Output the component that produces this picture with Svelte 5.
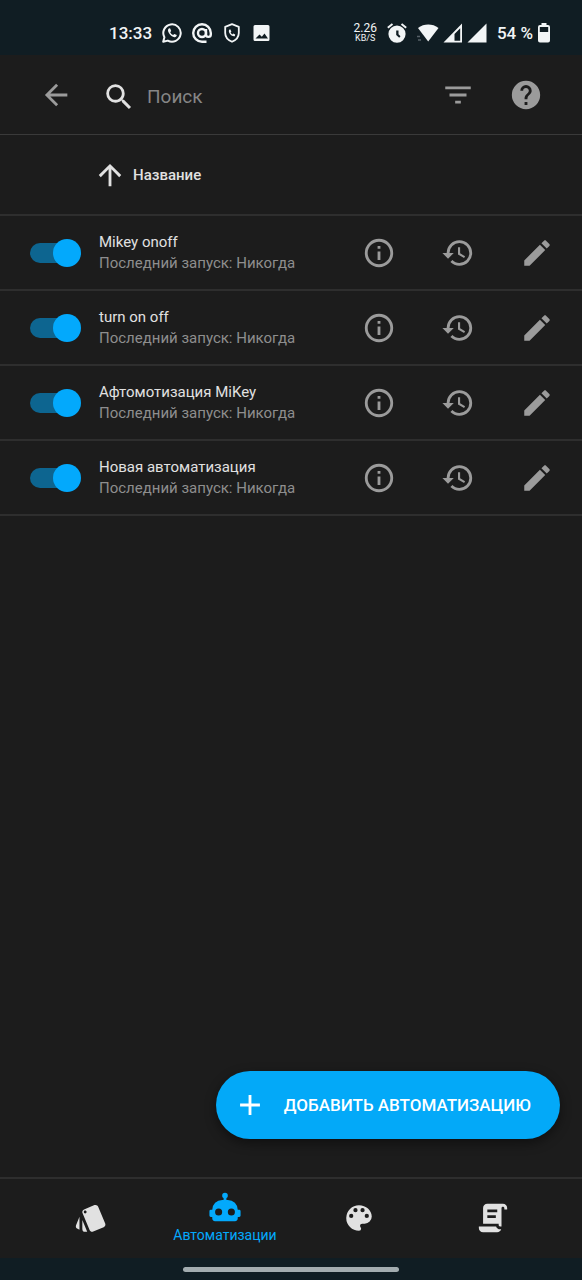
<script lang="ts">
  type Automation = { id: number; name: string; enabled: boolean };

  const icons = {
    back: 'M20,11V13H8L13.5,18.5L12.08,19.92L4.16,12L12.08,4.08L13.5,5.5L8,11H20Z',
    up: 'M13,20H11V8L5.5,13.5L4.08,12.08L12,4.16L19.92,12.08L18.5,13.5L13,8V20Z',
    search:
      'M9.5,3A6.5,6.5 0 0,1 16,9.5C16,11.11 15.41,12.59 14.44,13.73L14.71,14H15.5L20.5,19L19,20.5L14,15.5V14.71L13.73,14.44C12.59,15.41 11.11,16 9.5,16A6.5,6.5 0 0,1 3,9.5A6.5,6.5 0 0,1 9.5,3M9.5,5C7,5 5,7 5,9.5C5,12 7,14 9.5,14C12,14 14,12 14,9.5C14,7 12,5 9.5,5Z',
    filter: 'M6,13H18V11H6M3,6V8H21V6M10,18H14V16H10V18Z',
    help: 'M15.07,11.25L14.17,12.17C13.45,12.89 13,13.5 13,15H11V14.5C11,13.39 11.45,12.39 12.17,11.67L13.41,10.41C13.78,10.05 14,9.55 14,9C14,7.89 13.1,7 12,7A2,2 0 0,0 10,9H8A4,4 0 0,1 12,5A4,4 0 0,1 16,9C16,9.88 15.64,10.67 15.07,11.25M13,19H11V17H13M12,2A10,10 0 0,0 2,12A10,10 0 0,0 12,22A10,10 0 0,0 22,12C22,6.47 17.5,2 12,2Z',
    info: 'M11,9H13V7H11M12,20C7.59,20 4,16.41 4,12C4,7.59 7.59,4 12,4C16.41,4 20,7.59 20,12C20,16.41 16.41,20 12,20M12,2A10,10 0 0,0 2,12A10,10 0 0,0 12,22A10,10 0 0,0 22,12A10,10 0 0,0 12,2M11,17H13V11H11V17Z',
    history:
      'M13.5,8H12V13L16.28,15.54L17,14.33L13.5,12.25V8M13,3A9,9 0 0,0 4,12H1L4.96,16.03L9,12H6A7,7 0 0,1 13,5A7,7 0 0,1 20,12A7,7 0 0,1 13,19C11.07,19 9.32,18.21 8.06,16.94L6.64,18.36C8.27,20 10.5,21 13,21A9,9 0 0,0 22,12A9,9 0 0,0 13,3',
    pencil:
      'M20.71,7.04C21.1,6.65 21.1,6 20.71,5.63L18.37,3.29C18,2.9 17.35,2.9 16.96,3.29L15.12,5.12L18.87,8.87M3,17.25V21H6.75L17.81,9.93L14.06,6.18L3,17.25Z',
    plus: 'M19,13H13V19H11V13H5V11H11V5H13V11H19V13Z',
    blueprint:
      'M2.53,19.65L3.87,20.21V11.18L1.44,17.04C1.03,18.06 1.5,19.23 2.53,19.65M22.03,15.95L17.07,4C16.76,3.23 16.03,2.77 15.26,2.75C15,2.75 14.73,2.79 14.47,2.9L7.1,5.95C6.35,6.26 5.89,7 5.87,7.75C5.86,8 5.91,8.29 6,8.55L11,20.5C11.29,21.28 12.03,21.74 12.81,21.75C13.07,21.75 13.33,21.7 13.58,21.6L20.94,18.55C21.96,18.13 22.45,16.96 22.03,15.95M7.88,8.75A1,1 0 0,1 6.88,7.75A1,1 0 0,1 7.88,6.75C8.43,6.75 8.88,7.2 8.88,7.75C8.88,8.3 8.43,8.75 7.88,8.75M5.88,19.75A2,2 0 0,0 7.88,21.75H9.33L5.88,13.41V19.75Z',
    robot:
      'M12,2A2,2 0 0,1 14,4C14,4.74 13.6,5.39 13,5.73V7H14A7,7 0 0,1 21,14H22A1,1 0 0,1 23,15V18A1,1 0 0,1 22,19H21V20A2,2 0 0,1 19,22H5A2,2 0 0,1 3,20V19H2A1,1 0 0,1 1,18V15A1,1 0 0,1 2,14H3A7,7 0 0,1 10,7H11V5.73C10.4,5.39 10,4.74 10,4A2,2 0 0,1 12,2M7.5,13A2.5,2.5 0 0,0 5,15.5A2.5,2.5 0 0,0 7.5,18A2.5,2.5 0 0,0 10,15.5A2.5,2.5 0 0,0 7.5,13M16.5,13A2.5,2.5 0 0,0 14,15.5A2.5,2.5 0 0,0 16.5,18A2.5,2.5 0 0,0 19,15.5A2.5,2.5 0 0,0 16.5,13Z',
    palette:
      'M17.5,12A1.5,1.5 0 0,1 16,10.5A1.5,1.5 0 0,1 17.5,9A1.5,1.5 0 0,1 19,10.5A1.5,1.5 0 0,1 17.5,12M14.5,8A1.5,1.5 0 0,1 13,6.5A1.5,1.5 0 0,1 14.5,5A1.5,1.5 0 0,1 16,6.5A1.5,1.5 0 0,1 14.5,8M9.5,8A1.5,1.5 0 0,1 8,6.5A1.5,1.5 0 0,1 9.5,5A1.5,1.5 0 0,1 11,6.5A1.5,1.5 0 0,1 9.5,8M6.5,12A1.5,1.5 0 0,1 5,10.5A1.5,1.5 0 0,1 6.5,9A1.5,1.5 0 0,1 8,10.5A1.5,1.5 0 0,1 6.5,12M12,3A9,9 0 0,0 3,12A9,9 0 0,0 12,21A1.5,1.5 0 0,0 13.5,19.5C13.5,19.11 13.35,18.76 13.11,18.5C12.88,18.23 12.73,17.88 12.73,17.5A1.5,1.5 0 0,1 14.23,16H16A5,5 0 0,0 21,11C21,6.58 16.97,3 12,3Z',
    script:
      'M17.8,20C17.4,21.2 16.3,22 15,22H5C3.3,22 2,20.7 2,19V18H5L14.2,18C14.6,19.2 15.7,20 17,20H17.8M19,2C20.7,2 22,3.3 22,5V6H20V5C20,4.4 19.6,4 19,4C18.4,4 18,4.4 18,5V18H17C16.4,18 16,17.6 16,17V16H5V5C5,3.3 6.3,2 8,2H19M8,6V8H15V6H8M8,10V12H14V10H8Z',
  };

  let automations = $state<Automation[]>([
    { id: 1, name: 'Mikey onoff', enabled: true },
    { id: 2, name: 'turn on off', enabled: true },
    { id: 3, name: 'Афтомотизация MiKey', enabled: true },
    { id: 4, name: 'Новая автоматизация', enabled: true },
  ]);

  const tabs = [
    { id: 'blueprint', label: 'Проекты', icon: icons.blueprint },
    { id: 'automation', label: 'Автоматизации', icon: icons.robot },
    { id: 'scene', label: 'Сцены', icon: icons.palette },
    { id: 'script', label: 'Скрипты', icon: icons.script },
  ];

  let active = $state('automation');
  let query = $state('');
  let ascending = $state(true);

  let rows = $derived(
    automations.filter((a) => a.name.toLowerCase().includes(query.toLowerCase()))
  );
</script>

{#snippet icon(path: string)}
  <svg class="icon" viewBox="0 0 24 24" fill="currentColor" aria-hidden="true">
    <path d={path} />
  </svg>
{/snippet}

<div class="screen">
  <div class="status-bar">
    <div class="status-group notifications">
      <span class="clock">13:33</span>
      <svg width="20" height="20" viewBox="0 0 20 20" fill="none" stroke="currentColor" stroke-width="2">
        <path d="M1.2 18.8l1.2-4.6a8.7 8.7 0 1 1 3.4 3.4z" stroke-linejoin="round" />
        <path d="M7.2 5.3c-1.6.9-1.5 2.8-.3 4.6 1.5 2.4 3.6 4 5.6 4.3 1.3.1 2.3-.8 2.3-2.1l-2.5-1.2-1.2 1.2c-1.3-.6-2.3-1.6-2.9-2.8l1-1.3-1-2.6z" fill="currentColor" stroke="none" />
      </svg>
      <svg width="20" height="20" viewBox="0 0 20 20" fill="none" stroke="currentColor" stroke-width="2.4">
        <circle cx="10" cy="10" r="4" />
        <path d="M14 6v5.500a2.400 2.400 0 0 0 4.800 0V10a8.800 8.800 0 1 0-8.800 8.800h4.500" />
      </svg>
      <svg width="20" height="20" viewBox="0 0 20 20" fill="none" stroke="currentColor" stroke-width="1.8">
        <path d="M10 1.200l6.800 2.600v6.200c0 4-2.700 7-6.800 8.800-4.100-1.800-6.800-4.800-6.800-8.800V3.800z" stroke-linejoin="round" />
        <path d="M8.200 6.200C6.500 6.600 6.500 8.500 7.500 10.300c1.300 2.200 3.200 3.300 5.300 3l.4-1.800-2-.9-.9.800c-.8-.5-1.400-1.200-1.700-2.100l.8-.9z" fill="currentColor" stroke="none" />
      </svg>
      <svg width="20" height="20" viewBox="0 0 20 20">
        <path fill="currentColor" fill-rule="evenodd" d="M3 2h13a1.500 1.500 0 0 1 1.500 1.500v13a1.500 1.500 0 0 1-1.500 1.500H3a1.500 1.500 0 0 1-1.500-1.500v-13A1.500 1.500 0 0 1 3 2zM3.500 15.500h12.500l-3.500-5-2.700 3.300-2.300-2.300z" />
      </svg>
    </div>
    <div class="status-group">
      <span class="speed"><span>2.26</span><small>KB/S</small></span>
      <svg class="alarm" width="20" height="20" viewBox="0 0 20 20">
        <path fill="currentColor" fill-rule="evenodd" d="M10 2.500a8.600 8.600 0 1 1 0 17.200 8.600 8.600 0 0 1 0-17.200zM9.200 7.500v4.600l3 2.600 1.300-1.500-2-1.900V7.500z" />
        <path d="M.8 4.800L5.500 1M19.200 4.800L14.500 1" stroke="currentColor" stroke-width="2" />
      </svg>
      <svg class="wifi" width="22" height="20" viewBox="0 0 22 20">
        <path fill="currentColor" d="M1 5c6-4.600 14.500-4.600 20.500 0L11.200 18.600z" />
        <path d="M0 13.500h3M1 17h3" stroke="#566067" stroke-width="1.500" />
      </svg>
      <svg class="signal" width="20" height="20" viewBox="0 0 20 20" fill="currentColor">
        <path fill-rule="evenodd" d="M19 .5v19H.5zM17.200 5.200L11.500 11v6.700h5.700z" />
      </svg>
      <svg class="signal" width="20" height="20" viewBox="0 0 20 20" fill="currentColor">
        <path d="M19.500 .5v19H.5z" />
      </svg>
      <span class="battery-level">54 %</span>
      <svg width="14" height="20" viewBox="0 0 14 20">
        <path fill="currentColor" fill-rule="evenodd" d="M4.500 0h5v2H11a2 2 0 0 1 2 2v13.500a2 2 0 0 1-2 2H3a2 2 0 0 1-2-2V4a2 2 0 0 1 2-2h1.500zM2.800 4v5h8.400V4z" />
      </svg>
    </div>
  </div>

  <header class="toolbar">
    <button class="icon-btn" aria-label="Назад">{@render icon(icons.back)}</button>
    <label class="search">
      {@render icon(icons.search)}
      <input type="text" placeholder="Поиск" aria-label="Поиск" bind:value={query} />
    </label>
    <button class="icon-btn" aria-label="Фильтр">{@render icon(icons.filter)}</button>
    <button class="icon-btn" aria-label="Справка">{@render icon(icons.help)}</button>
  </header>

  <main>
    <table>
      <thead>
        <tr>
          <th class="toggle-cell"></th>
          <th class="name-cell" colspan="4" aria-sort={ascending ? 'ascending' : 'descending'}>
            <button class="sort" class:desc={!ascending} onclick={() => (ascending = !ascending)}>
              {@render icon(icons.up)}
              Название
            </button>
          </th>
        </tr>
      </thead>
      <tbody>
        {#each rows as item (item.id)}
          <tr>
            <td class="toggle-cell">
              <input class="switch" type="checkbox" role="switch" aria-label={item.name} bind:checked={item.enabled} />
            </td>
            <td class="name-cell">
              <div class="name">{item.name}</div>
              <div class="secondary">Последний запуск: Никогда</div>
            </td>
            <td class="action-cell">
              <button class="icon-btn" aria-label="Информация">{@render icon(icons.info)}</button>
            </td>
            <td class="action-cell">
              <button class="icon-btn" aria-label="История">{@render icon(icons.history)}</button>
            </td>
            <td class="action-cell last">
              <button class="icon-btn" aria-label="Изменить">{@render icon(icons.pencil)}</button>
            </td>
          </tr>
        {/each}
      </tbody>
    </table>
  </main>

  <div class="bottom">
    <button class="fab">
      {@render icon(icons.plus)}
      <span>Добавить автоматизацию</span>
    </button>
    <nav>
      {#each tabs as tab (tab.id)}
        <button
          class="tab"
          class:active={active === tab.id}
          aria-label={tab.label}
          onclick={() => (active = tab.id)}
        >
          {@render icon(tab.icon)}
          {#if active === tab.id}<span>{tab.label}</span>{/if}
        </button>
      {/each}
    </nav>
    <div class="gesture-bar"><span></span></div>
  </div>
</div>

<style>
  :global(body) {
    background: #1c1c1c;
  }

  .screen {
    --primary: #03a9f8;
    --accent: #03a9fc;
    --text: #e1e1e1;
    --muted: #9b9b9b;
    --divider: #2e2e2e;
    --system: #101d23;
    display: flex;
    flex-direction: column;
    min-height: 100vh;
    background: #1c1c1c;
    color: var(--text);
    font-family: Roboto, 'Noto Sans', sans-serif;
    font-size: 15px;
  }

  button {
    margin: 0;
    padding: 0;
    border: none;
    background: none;
    color: inherit;
    font: inherit;
    cursor: pointer;
  }

  svg {
    display: block;
    flex-shrink: 0;
  }

  .icon {
    width: 34px;
    height: 34px;
  }

  .status-bar {
    display: flex;
    justify-content: space-between;
    align-items: center;
    height: 55px;
    padding: 10px 31px 0 109px;
    box-sizing: border-box;
    background: var(--system);
    color: #f2f5f6;
  }

  .status-group {
    display: flex;
    align-items: center;
  }

  .notifications {
    gap: 10px;
  }

  .clock,
  .battery-level {
    font-size: 17px;
    font-weight: 500;
  }

  .battery-level {
    margin: 0 4px 0 10px;
  }

  .speed {
    display: flex;
    flex-direction: column;
    align-items: center;
    font-size: 12px;
    line-height: 12px;
  }

  .speed small {
    font-size: 9px;
    line-height: 9px;
  }

  .alarm {
    margin: 0 10px;
  }

  .signal {
    margin-left: 4px;
  }

  .toolbar {
    display: flex;
    align-items: center;
    height: 80px;
    padding: 0 22px;
    box-sizing: border-box;
    border-bottom: 1px solid #3a3a3a;
  }

  .icon-btn {
    display: flex;
    align-items: center;
    justify-content: center;
    width: 68px;
    height: 68px;
    color: var(--muted);
  }

  .search {
    display: flex;
    flex: 1;
    align-items: center;
    gap: 11px;
    min-width: 0;
    padding: 4px 0 0 12px;
  }

  .search input {
    flex: 1;
    min-width: 0;
    padding: 0;
    border: none;
    outline: none;
    background: transparent;
    color: var(--text);
    font: inherit;
    font-size: 19px;
  }

  .search input::placeholder {
    color: #868686;
    opacity: 1;
  }

  main {
    flex: 1;
  }

  table {
    width: 100%;
    border-collapse: separate;
    border-spacing: 0;
  }

  th,
  td {
    height: 73px;
    padding: 0;
    border-bottom: 2px solid var(--divider);
    text-align: left;
    vertical-align: middle;
  }

  th {
    height: 79px;
  }

  .toggle-cell {
    width: 69px;
    padding-left: 30px;
  }

  .action-cell {
    width: 79px;
  }

  .action-cell.last {
    padding-right: 6px;
  }

  .action-cell .icon-btn {
    margin: 0 auto;
  }

  .sort {
    display: flex;
    align-items: center;
    gap: 6px;
    margin-left: -6px;
    font-weight: 500;
  }

  .sort.desc .icon {
    rotate: 180deg;
  }

  .name,
  .secondary {
    line-height: 21px;
    white-space: nowrap;
  }

  .secondary {
    color: #8e8e8e;
  }

  .switch {
    display: flex;
    align-items: center;
    width: 48px;
    height: 20px;
    margin: 0;
    border-radius: 10px;
    appearance: none;
    background: #4a4a4a;
    cursor: pointer;
  }

  .switch::before {
    content: '';
    flex-shrink: 0;
    width: 28px;
    height: 28px;
    border-radius: 50%;
    background: #b0b0b0;
  }

  .switch:checked {
    background: #0d6590;
  }

  .switch:checked::before {
    margin-left: 23px;
    background: var(--accent);
  }

  .bottom {
    position: sticky;
    bottom: 0;
    background: #1c1c1c;
  }

  /* floats above the tab bar */
  .fab {
    position: absolute;
    right: 22px;
    bottom: calc(100% + 38px);
    display: flex;
    align-items: center;
    gap: 17px;
    height: 68px;
    padding: 0 29px 0 17px;
    border-radius: 34px;
    background: var(--primary);
    box-shadow: 0 4px 12px rgba(0, 0, 0, 0.45);
    color: #fff;
    font-size: 17px;
    font-weight: 500;
    text-transform: uppercase;
    white-space: nowrap;
  }

  nav {
    display: flex;
    height: 79px;
    padding: 0 22px 2px 24px;
    box-sizing: content-box;
    height: 77px;
    border-top: 2px solid var(--divider);
  }

  .tab {
    display: flex;
    flex: 1;
    flex-direction: column;
    align-items: center;
    justify-content: center;
    min-width: 0;
  }

  .tab.active {
    color: var(--accent);
    font-size: 14px;
    line-height: 22px;
  }

  .gesture-bar {
    display: flex;
    align-items: center;
    justify-content: center;
    height: 22px;
    background: var(--system);
  }

  .gesture-bar span {
    width: 37%;
    height: 5px;
    border-radius: 3px;
    background: #a3acaf;
  }
</style>
